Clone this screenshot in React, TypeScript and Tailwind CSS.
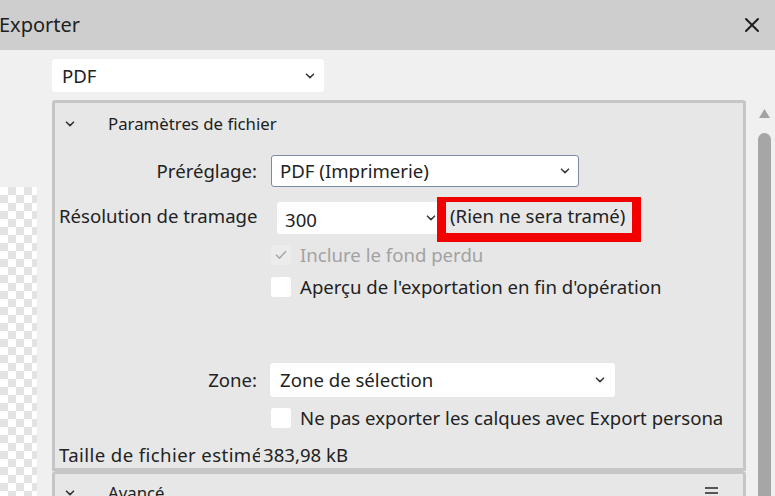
import React from "react";

const Chevron = ({ color = "#3c3c3c" }: { color?: string }) => (
  <svg width="10" height="6" viewBox="0 0 10 6" className="shrink-0">
    <path d="M1.5 1.2l3.5 3.4 3.5-3.4" fill="none" stroke={color} strokeWidth="1.6" strokeLinecap="round" strokeLinejoin="round" />
  </svg>
);

const Check = ({ disabled = false, checked = false }: { disabled?: boolean; checked?: boolean }) => (
  <div className={disabled ? "w-[20px] h-[20px] shrink-0 rounded-[3px] bg-[#ececec] flex items-center justify-center" : "w-[20px] h-[20px] shrink-0 rounded-[3px] bg-white flex items-center justify-center"}>
    {checked && (
      <svg width="12" height="10" viewBox="0 0 12 10">
        <path d="M1.5 5.2l3 3 6-6.5" fill="none" stroke="#a9a9a9" strokeWidth="1.6" strokeLinecap="round" strokeLinejoin="round" />
      </svg>
    )}
  </div>
);

const App = () => {
  return (
    <div className="w-[775px] h-[496px] overflow-hidden flex flex-col bg-[#f0f0f0] text-[#222] font-['Noto_Sans',sans-serif]">
      {/* title bar */}
      <div className="h-[50px] shrink-0 bg-[#cecece] flex items-center justify-between pr-[15px]">
        <span className="text-[20px] text-[#1e1e1e] -ml-[1px]">Exporter</span>
        <svg width="16" height="16" viewBox="0 0 16 16">
          <path d="M2 2l12 12M14 2L2 14" stroke="#1e1e1e" strokeWidth="2" strokeLinecap="round" />
        </svg>
      </div>

      <div className="h-[446px] shrink-0 flex flex-row">
        {/* left preview strip */}
        <div className="w-[52px] shrink-0 flex flex-col pt-[137px]">
          <div className="w-[37px] flex-1 bg-white bg-[image:conic-gradient(#e3e3e3_25%,#fff_0_50%,#e3e3e3_0_75%,#fff_0)] bg-[length:16px_16px]" />
        </div>

        {/* main column */}
        <div className="w-[694px] shrink-0 flex flex-col text-[18.6px]">
          <div className="shrink-0 mt-[9px] h-[33px] w-[272px] bg-white rounded-[3px] flex items-center justify-between pl-[10px] pr-[9px]">
            <span>PDF</span>
            <Chevron />
          </div>

          {/* Paramètres de fichier */}
          <div className="shrink-0 mt-[8px] border-[3px] border-[#c6c6c6] bg-[#e7e7e7] rounded-t-[3px] flex flex-col">
            <div className="shrink-0 h-[42px] flex items-center pl-[10px]">
              <Chevron color="#333" />
              <span className="ml-[33px] text-[16.8px] text-[#1e1e1e]">Paramètres de fichier</span>
            </div>

            <div className="shrink-0 mt-[10px] h-[32px] flex items-center pl-[4px]">
              <div className="w-[198px] shrink-0 text-right whitespace-nowrap overflow-hidden">Préréglage:</div>
              <div className="ml-[14px] w-[308px] h-full bg-white border border-[#7a8ca6] rounded-[3px] flex items-center justify-between pl-[8px] pr-[8px]">
                <span>PDF (Imprimerie)</span>
                <Chevron />
              </div>
            </div>

            <div className="relative shrink-0 mt-[15px] h-[32px] flex items-center pl-[4px]">
              <div className="w-[198px] shrink-0 whitespace-nowrap overflow-hidden -mt-[4px]">Résolution de tramage</div>
              <div className="ml-[20px] w-[168px] h-full bg-white rounded-[3px] flex items-center justify-between pl-[8px] pr-[9px]">
                <span className="mt-[3px]">300</span>
                <Chevron />
              </div>
              <span className="ml-[5px] -mt-[4px] whitespace-nowrap">(Rien ne sera tramé)</span>
              <div className="absolute left-[382px] top-[-5px] w-[204px] h-[45px] border-[#f20000] border-t-[5px] border-x-[9px] border-b-[9px]" />
            </div>

            <div className="shrink-0 mt-[11px] h-[20px] flex items-center pl-[216px]">
              <Check disabled checked />
              <span className="ml-[9px] text-[#a2a2a2]">Inclure le fond perdu</span>
            </div>

            <div className="shrink-0 mt-[12px] h-[20px] flex items-center pl-[216px]">
              <Check />
              <span className="ml-[9px] whitespace-nowrap">Aperçu de l'exportation en fin d'opération</span>
            </div>

            <div className="shrink-0 mt-[66px] h-[34px] flex items-center pl-[4px]">
              <div className="w-[198px] shrink-0 text-right whitespace-nowrap overflow-hidden">Zone:</div>
              <div className="ml-[13px] w-[345px] h-full bg-white rounded-[3px] flex items-center justify-between pl-[10px] pr-[10px]">
                <span>Zone de sélection</span>
                <Chevron />
              </div>
            </div>

            <div className="shrink-0 mt-[10px] h-[21px] flex items-center pl-[216px]">
              <Check />
              <span className="ml-[9px] whitespace-nowrap">Ne pas exporter les calques avec Export persona</span>
            </div>

            <div className="shrink-0 mt-[17px] mb-[3px] h-[20px] flex items-center pl-[4px]">
              <div className="w-[201px] shrink-0 whitespace-nowrap overflow-hidden tracking-[0.4px]">Taille de fichier estimée :</div>
              <span className="ml-[3px] whitespace-nowrap">383,98 kB</span>
            </div>
          </div>

          {/* Avancé */}
          <div className="flex-1 min-h-0 overflow-hidden border-[3px] border-b-0 border-[#c6c6c6] bg-[#e7e7e7] rounded-t-[4px]">
            <div className="h-[38px] flex items-center pl-[10px] pr-[25px]">
              <Chevron color="#333" />
              <span className="ml-[33px] text-[16.8px] text-[#1e1e1e]">Avancé</span>
              <div className="ml-auto flex flex-col gap-[3px]">
                <div className="w-[13px] h-[2px] bg-[#555]" />
                <div className="w-[13px] h-[2px] bg-[#555]" />
                <div className="w-[13px] h-[2px] bg-[#555]" />
              </div>
            </div>
          </div>
        </div>

        {/* scrollbar */}
        <div className="flex-1 flex flex-col pl-[12px] pt-[58px]">
          <svg width="13" height="11" viewBox="0 0 13 11" className="shrink-0">
            <path d="M6.5 1L12 10H1z" fill="#a3a3a3" />
          </svg>
          <div className="mt-[14px] w-[13px] flex-1 bg-[#a6a6a6] rounded-t-full" />
        </div>
      </div>
    </div>
  );
};

export default App;
